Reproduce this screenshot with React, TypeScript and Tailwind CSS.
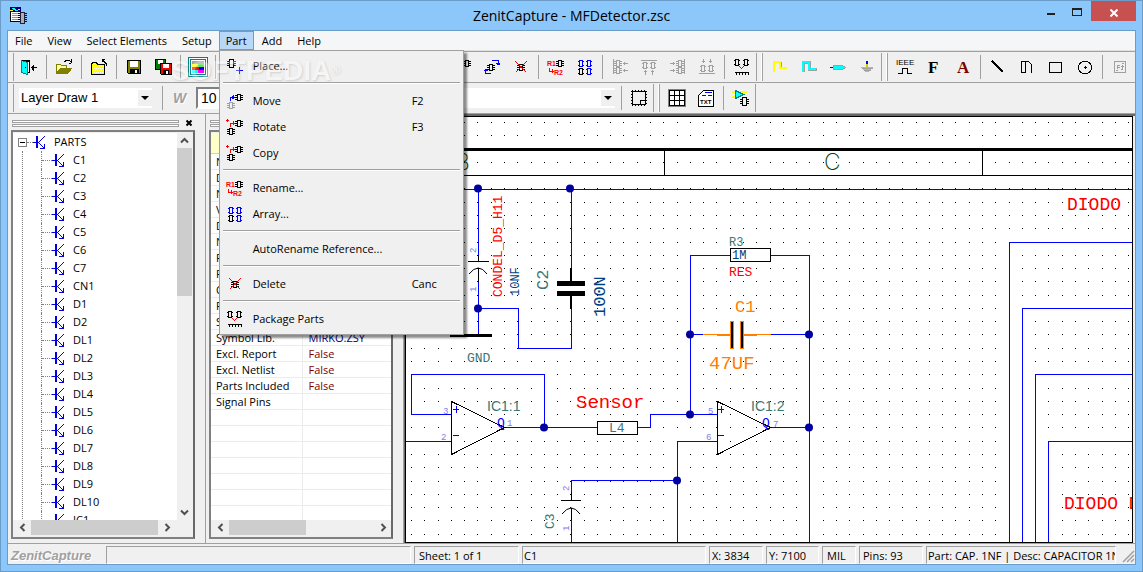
import { Fragment, type ReactNode } from "react";

/* ---------- small drawing helpers for the 18x18 toolbar glyphs ---------- */

function Glyph({ children }: { children?: ReactNode }) {
  return (
    <svg
      className="size-[18px] shrink-0 overflow-visible"
      viewBox="0 0 18 18"
      fill="none"
      stroke="#000"
      shapeRendering="crispEdges"
      aria-hidden="true"
    >
      {children}
    </svg>
  );
}

// IC package standing upright, pins left and right
function Chip({ x, y, c = "#000" }: { x: number; y: number; c?: string }) {
  return (
    <path
      transform={`translate(${x} ${y})`}
      stroke={c}
      d="M2.5 .5h4v8h-4zM0 2.5h2M0 4.5h2M0 6.5h2M7 2.5h2M7 4.5h2M7 6.5h2"
    />
  );
}

function SmallChip({ x, y, c = "#000" }: { x: number; y: number; c?: string }) {
  return (
    <path
      transform={`translate(${x} ${y})`}
      stroke={c}
      d="M2.5 .5h3v6h-3zM0 1.5h2M0 3.5h2M0 5.5h2M6 1.5h2M6 3.5h2M6 5.5h2"
    />
  );
}

function TinyChip({ x, y, c = "#000" }: { x: number; y: number; c?: string }) {
  return (
    <path
      transform={`translate(${x} ${y})`}
      stroke={c}
      d="M1.5 .5h3v6h-3zM0 1.5h1M0 5.5h1M5 1.5h1M5 5.5h1"
    />
  );
}

const GREY = "#a0a0a0";

const icons: Record<string, ReactNode> = {
  exit: (
    <>
      <path fill="#fff" d="M2.5 3.5h7v11h-7z" />
      <path fill="#0ff" stroke="#008080" d="M1.500 2.500l6 2v12l-6-2z" />
      <path d="M5 9.500h1M11 9.500h6M13.500 6.500v6M12.500 7.500v4M2 2.500h7.500v3M8 14.500h1.500v-3" />
    </>
  ),
  open: (
    <>
      <path fill="#ff9" stroke="#808000" d="M1.500 15.500v-9h4l1 1h5v3h-6z" />
      <path fill="#808000" stroke="#808000" d="M2.500 15.500l3-5h11l-4 5z" />
      <path d="M9.500 3.500l2-1h3l2 2M16.500 1v4M14 5.500h2" />
    </>
  ),
  folder: (
    <>
      <path fill="#ff0" d="M1.500 16.500v-10l1-2h4l1 2h7v10z" />
      <path stroke="#fff" strokeDasharray="1 1" d="M3 8.500h11M4 10.500h10M3 12.500h11M4 14.500h10" />
      <path d="M12 1.500h3M12.500 1v3M13 2.500l3 3v2" />
    </>
  ),
  save: (
    <>
      <path fill="#808000" d="M2.500 2.500h13v13h-12l-1-1z" />
      <path fill="#fff" stroke="none" d="M5 3h8v6H5z" />
      <path fill="#000" stroke="none" d="M5 11h9v5H5z" />
      <path fill="#fff" stroke="none" d="M10 12h2v3h-2z" />
    </>
  ),
  saveAll: (
    <>
      <path fill="#008000" d="M1.500 1.500h10v10h-10z" />
      <path fill="#fff" stroke="none" d="M4 2h5v4H4z" />
      <path fill="red" d="M6.500 5.500h11v11h-10l-1-1z" />
      <path fill="#fff" stroke="none" d="M9 6h6v4H9z" />
      <path fill="#000" stroke="none" d="M9 12h6v4H9z" />
      <path fill="#fff" stroke="none" d="M12 13h2v3h-2z" />
    </>
  ),
  layers: (
    <>
      <path fill="#fff" stroke="#008080" d="M-.5 -.5h19v19h-19zM1.500 1.500h15v15h-15z" />
      <g stroke="none">
        <path fill="#a0a0a0" d="M3 3h12v3H3z" />
        <path fill="#ff0" d="M3 6h6v3H3z" />
        <path fill="#60f060" d="M9 6h6v4H9z" />
        <path fill="red" d="M3 9h7v3H3z" />
        <path fill="#00f" d="M10 9h5v3h-5z" />
        <path fill="#0ff" d="M3 12h6v3H3z" />
        <path fill="#f0f" d="M9 12h6v3H9z" />
      </g>
    </>
  ),
  place: (
    <>
      <Chip x={1} y={2} />
      <path stroke="#00f" d="M10 13.500h7M13.500 10v7" />
    </>
  ),
  move: (
    <>
      <SmallChip x={9} y={2} />
      <SmallChip x={1} y={10} c={GREY} />
      <path stroke="#00f" d="M4.500 9v-4h4M7.500 3v4M6.500 4v3" />
    </>
  ),
  rotate: (
    <>
      <SmallChip x={9} y={2} />
      <SmallChip x={1} y={10} />
      <path stroke="red" d="M4.500 9v-4h4M7.500 3v4M0 2.500h3M1.500 1v3" />
    </>
  ),
  swap: (
    <>
      <SmallChip x={4} y={6} />
      <path stroke="#00f" d="M9 2.500h6.500v3M13 5.500h4M14 6.500h3M8 15.500H2.500v-4M1 12.500h4M2 11.500h2" />
    </>
  ),
  delete: (
    <>
      <SmallChip x={5} y={6} />
      <path stroke="#f00000" strokeWidth="1.200" d="M3.500 3.500l11 11M14.500 3.500l-11 11" />
    </>
  ),
  rename: (
    <>
      <SmallChip x={9} y={2} />
      <text x="0" y="8" className="font-['Liberation_Sans'] text-[7px] font-bold" fill="red" stroke="none">R1</text>
      <text x="7" y="17" className="font-['Liberation_Sans'] text-[7px] font-bold" fill="red" stroke="none">R2</text>
      <path stroke="red" d="M2.500 10v3h4M5.500 11v4" />
    </>
  ),
  array: (
    <>
      <TinyChip x={2} y={2} c="#00f" />
      <TinyChip x={10} y={2} c="#00f" />
      <TinyChip x={2} y={10} />
      <TinyChip x={10} y={10} c="#00f" />
    </>
  ),
  alignLeft: (
    <>
      <path stroke={GREY} d="M2.500 1v15M12 5.500h5M13.500 4v3M12 12.500h5M13.500 11v3" />
      <SmallChip x={3} y={2} c={GREY} />
      <SmallChip x={3} y={9} c={GREY} />
    </>
  ),
  alignTop: (
    <>
      <path stroke={GREY} d="M1 2.500h16M5.500 12v5M4 13.500h3M12.500 12v5M11 13.500h3" />
      <TinyChip x={2} y={4} c={GREY} />
      <TinyChip x={10} y={4} c={GREY} />
    </>
  ),
  alignRight: (
    <>
      <path stroke={GREY} d="M15.500 1v15M1 5.500h5M4.500 4v3M1 12.500h5M4.500 11v3" />
      <SmallChip x={7} y={2} c={GREY} />
      <SmallChip x={7} y={9} c={GREY} />
    </>
  ),
  alignBottom: (
    <>
      <path stroke={GREY} d="M1 15.500h16M5.500 1v4M4 3.500h3M12.500 1v4M11 3.500h3" />
      <TinyChip x={2} y={7} c={GREY} />
      <TinyChip x={10} y={7} c={GREY} />
    </>
  ),
  pack: (
    <>
      <TinyChip x={1} y={1} />
      <TinyChip x={10} y={1} />
      <path stroke="red" d="M6.500 8.500l2 2 2-2" />
      <path d="M2 14.500h14M3.500 14v3M6.500 14v3M9.500 14v3M12.500 14v3M15.500 14v3" />
    </>
  ),
  wire: (
    <>
      <path stroke={GREY} d="M3.500 14V4.500h7v5h5" />
      <path stroke="#ff0" strokeWidth="2" d="M3 14V4h6v6h7" />
    </>
  ),
  bus: (
    <>
      <path stroke={GREY} strokeWidth="3" d="M3.500 14V4.500h6v7h7" />
      <path stroke="#0ff" strokeWidth="2" d="M3 14V4h6v7h7" />
    </>
  ),
  port: (
    <>
      <path stroke="#00f" d="M1 9.500h3" />
      <path fill="#0ff" stroke={GREY} d="M4.500 7.500h9l3 2-3 2h-9z" />
    </>
  ),
  ground: (
    <>
      <path stroke="#00f" strokeWidth="2" d="M9 3v3" />
      <path stroke="#cc0" strokeWidth="2" d="M9 6v4" />
      <path stroke="#cc0" d="M3 9.500h12M5 11.500h8M7 13.500h4" />
      <path stroke={GREY} d="M4 10.500h11M6 12.500h7" />
    </>
  ),
  ieee: (
    <>
      <text x="0" y="7" className="font-['Liberation_Sans'] text-[8px]" fill="#000" stroke="none">IEEE</text>
      <path d="M2 15.500h4.500v-5h5v5h4.500" />
    </>
  ),
  bold: (
    <text x="3" y="15" className="font-['Liberation_Serif'] text-[17px] font-bold" fill="#000" stroke="none">F</text>
  ),
  text: (
    <text x="3" y="15" className="font-['Liberation_Serif'] text-[17px] font-bold" fill="#800000" stroke="none">A</text>
  ),
  line: <path strokeWidth="2" d="M3 3l11 11" />,
  curve: <path d="M3 3.500h3.500M3.500 3v11M3 14.500h4.500v-11h3l3 3v8" />,
  rect: <path d="M2.500 4.500h12v10h-12z" />,
  circle: (
    <>
      <circle cx="9" cy="9.500" r="6.500" />
      <path d="M8 9.500h3M9.500 8v3" />
    </>
  ),
  image: (
    <path stroke={GREY} d="M3.500 3.500h11v11h-11zM6.500 11v-4h2M6 9.500h3M11.500 7v4h-2M10 8.500h3M11 5.500h2M5 12.500h2" />
  ),
  frame: (
    <>
      <path d="M2.500 2.500h13v13h-13zM10.500 15v-4h5" />
      <path strokeDasharray="1 2" d="M2 1.500h15M2 16.500h15M1.500 2v15M16.500 2v15" />
    </>
  ),
  grid: (
    <>
      <path stroke="#808080" d="M.5 .5h17v17H.5z" />
      <path fill="#fff" d="M1.500 1.500h15v15h-15zM6.500 1v15M11.500 1v15M1 6.500h15M1 11.500h15" />
    </>
  ),
  txt: (
    <>
      <path fill="#fff" d="M1.500 17.500v-11l5-5h10v16z" />
      <path stroke="#00f" d="M8 3.500h7M5 6.500h4M11 6.500h4" />
      <text x="3" y="15" className="font-['Liberation_Sans'] text-[6px] font-bold" fill="#000" stroke="none">TXT</text>
    </>
  ),
  amp: (
    <>
      <path stroke="#ff0" strokeWidth="2" d="M0 3h15M0 8h4" />
      <path fill="#0ff" stroke="#008080" d="M3.500 1.500l8 4-8 4z" />
      <Chip x={8} y={8} />
    </>
  ),
};

/* ---------- data ---------- */

const menuEntries = [
  [{ label: "Place...", icon: "place" }],
  [
    { label: "Move", icon: "move", key: "F2" },
    { label: "Rotate", icon: "rotate", key: "F3" },
    { label: "Copy", icon: "rotate" },
  ],
  [
    { label: "Rename...", icon: "rename" },
    { label: "Array...", icon: "array" },
  ],
  [{ label: "AutoRename Reference..." }],
  [{ label: "Delete", icon: "delete", key: "Canc" }],
  [{ label: "Package Parts", icon: "pack" }],
] as { label: string; icon?: string; key?: string }[][];

// "|" is a separator, "#" starts a new docked bar
const mainBar =
  "exit | open | folder | save saveAll | layers | open save | move # place | wire bus | line rotate swap delete | rename array | alignLeft alignTop alignRight alignBottom | pack # wire bus port ground # ieee bold text | line curve rect circle | image".split(" ");

const parts = [
  "C1", "C2", "C3", "C4", "C5", "C6", "C7", "CN1", "D1", "D2", "DL1", "DL2",
  "DL3", "DL4", "DL5", "DL6", "DL7", "DL8", "DL9", "DL10", "IC1",
];

const properties = [
  ["Name"], ["Description"], ["Number"], ["Value"], ["Device"], ["Net"],
  ["Package"], ["Pins"], ["Order"], ["Position"], ["Style"],
  ["Symbol Lib.", "MIRKO.ZSY"],
  ["Excl. Report", "False"],
  ["Excl. Netlist", "False"],
  ["Parts Included", "False"],
  ["Signal Pins"],
  [], [], [], [], [], [], [], [],
];

/* ---------- toolbars ---------- */

function Separator() {
  return (
    <div className="flex w-1.5 shrink-0 items-center justify-center">
      <div className="h-6 w-px bg-[#a0a0a0]" />
    </div>
  );
}

function Grip() {
  return (
    <div className="flex w-[9px] shrink-0 gap-1 self-stretch py-px">
      <div className="w-px bg-[#a0a0a0]" />
      <div className="w-0.5 border-r border-[#a0a0a0] bg-white" />
    </div>
  );
}

function ToolButton({ name }: { name: string }) {
  return (
    <button aria-label={name} className="flex h-7 w-[29px] shrink-0 items-center justify-center">
      <Glyph>{icons[name]}</Glyph>
    </button>
  );
}

function Combo({ label, value, className }: { label: string; value?: string; className: string }) {
  return (
    <div className={`relative h-5 ${className}`}>
      <select
        aria-label={label}
        className="block h-5 w-full appearance-none bg-white px-0.5 font-['Liberation_Sans',sans-serif] text-[13px] leading-5"
      >
        <option>{value}</option>
      </select>
      <svg className="pointer-events-none absolute top-0.5 right-0 h-4 w-3.5 bg-[#f0f0f0]" viewBox="0 0 14 16">
        <path d="M3 6h8l-4 4z" />
      </svg>
    </div>
  );
}

/* ---------- docked panels ---------- */

function Chevron({ dir }: { dir: "up" | "down" | "left" | "right" }) {
  const d = {
    up: "M4 9.500l3.500-3.500 3.500 3.500",
    down: "M4 5.500l3.500 3.500 3.500-3.500",
    left: "M9.500 4l-3.500 3.500 3.500 3.500",
    right: "M5.500 4l3.500 3.500-3.500 3.500",
  }[dir];
  return (
    <svg className="size-[15px] shrink-0" viewBox="0 0 15 15" fill="none" stroke="#505050" strokeWidth="2">
      <path d={d} />
    </svg>
  );
}

function DockPanel({ closable, children }: { closable?: boolean; children: ReactNode }) {
  return (
    <section className="flex w-[198px] shrink-0 flex-col border-r border-[#a0a0a0] pt-0.5 pr-[10px] pb-1 pl-[3px]">
      <div className="flex h-3.5 shrink-0 items-center gap-1 pl-px">
        <div className="flex grow flex-col gap-px">
          <div className="h-[3px] border border-[#a0a0a0] bg-white" />
          <div className="h-[3px] border border-[#a0a0a0] bg-white" />
        </div>
        {closable && (
          <button aria-label="Close panel" className="flex size-3 items-center justify-center">
            <svg className="size-2" viewBox="0 0 8 8" stroke="#000" strokeWidth="2">
              <path d="M1.500 1.500l5 5M6.500 1.500l-5 5" />
            </svg>
          </button>
        )}
      </div>
      <div className="flex min-h-0 grow flex-col border-2 border-[#808080] border-r-[#696969] bg-[#f0f0f0] pt-px">
        {children}
      </div>
    </section>
  );
}

function PartIcon() {
  return (
    <svg className="h-[14px] w-[13px] shrink-0" viewBox="0 0 13 14" fill="none" stroke="#0000e0" shapeRendering="crispEdges">
      <path strokeWidth="2" d="M4 1v12" />
      <path d="M0 7.500h5M5.500 7.500l6-6M5.500 7.500l5.500 5.500M11.500 9v4.500M7 13.500h5" />
    </svg>
  );
}

function PartsTree() {
  return (
    <>
      <div className="flex min-h-0 grow">
        <ul className="min-w-0 grow overflow-hidden bg-white">
          <li>
            <button className="flex h-[18px] w-full items-center pl-[5px]">
              <svg className="size-[9px] shrink-0" viewBox="0 0 9 9" fill="none" shapeRendering="crispEdges">
                <path stroke="#808080" d="M.5 .5h8v8h-8z" />
                <path stroke="#000" d="M2 4.500h5" />
              </svg>
              <span className="w-1.5 border-t border-dotted border-[#808080]" />
              <PartIcon />
              <span className="pl-2">PARTS</span>
            </button>
            <ul className="ml-[9px] border-l border-dotted border-[#808080] pl-[18px]">
              {parts.map((part) => (
                <li key={part} className="border-l border-dotted border-[#808080]">
                  <button className="flex h-[18px] items-center">
                    <span className="w-2.5 border-t border-dotted border-[#808080]" />
                    <PartIcon />
                    <span className="pl-2">{part}</span>
                  </button>
                </li>
              ))}
            </ul>
          </li>
        </ul>
        <div className="mr-px flex w-[15px] shrink-0 flex-col">
          <Chevron dir="up" />
          <div className="h-[148px] bg-[#cdcdcd]" />
          <div className="grow" />
          <Chevron dir="down" />
        </div>
      </div>
      <div className="mr-[18px] mb-0.5 flex h-[15px] shrink-0 pl-0.5">
        <Chevron dir="left" />
        <div className="mr-0.5 ml-px grow bg-[#cdcdcd]" />
        <Chevron dir="right" />
      </div>
    </>
  );
}

function PropertyTable() {
  return (
    <>
      <div className="min-h-0 grow overflow-hidden bg-white">
        <table className="w-full table-fixed border-collapse">
          <thead>
            <tr className="h-5 border-b border-[#d0d0d0] bg-[#f8f8f0]">
              <th className="w-[91px] bg-[#ffffc8]" />
              <th />
            </tr>
          </thead>
          <tbody>
            {properties.map(([name, value], i) => (
              <tr key={i} className="h-4 border-b border-[#ececec] leading-[15px]">
                <td className="truncate border-r border-[#ececec] py-0 pl-[5px]">{name}</td>
                <td className={`truncate py-0 pl-1.5 ${value === "False" ? "text-[#800000]" : "text-[#000080]"}`}>
                  {value}
                </td>
              </tr>
            ))}
          </tbody>
        </table>
      </div>
      <div className="mb-0.5 flex h-[15px] shrink-0 pl-0.5">
        <Chevron dir="left" />
        <div className="ml-px w-[77px] bg-[#cdcdcd]" />
        <div className="grow" />
        <Chevron dir="right" />
      </div>
    </>
  );
}

/* ---------- schematic sheet ---------- */

const PITCH = 13.28;

function gridDots() {
  let d = "";
  for (let row = 0; row < 80; row++) {
    const y = Math.round(122 + row * PITCH);
    for (let col = 0; col < 160; col++) {
      d += `M${Math.round(411 + col * PITCH)} ${y}.5h1`;
    }
  }
  return d;
}

const junctions = [
  [478, 188], [570, 188], [478, 308], [544, 427], [690, 414],
  [690, 334], [809, 334], [809, 427], [677, 480],
];

function Label({ x, y, c, size, up, children }: { x: number; y: number; c: string; size: string; up?: boolean; children: string }) {
  return (
    <text x={x} y={y} fill={c} stroke="none" className={size} transform={up ? `rotate(-90 ${x} ${y})` : undefined}>
      {children}
    </text>
  );
}

function Schematic() {
  const teal = "#3a7878";
  const pin = "#8080f0";
  return (
    <svg
      className="block size-full font-['Liberation_Mono',monospace] whitespace-pre"
      fill="none"
      stroke="#000"
      shapeRendering="crispEdges"
      role="img"
      aria-label="Schematic sheet"
    >
      <g transform="translate(-406 -117)">
        <path d={gridDots()} />
        {/* sheet frame */}
        <path strokeWidth="3" d="M405 149.500h2000" />
        <path d="M405 175.500h2000M664.500 150v25M982.500 150v25" />
        <Label x={455} y={170} c="#004000" size="font-['Inter'] font-extralight text-[23px]">B</Label>
        <Label x={824} y={170} c="#004000" size="font-['Inter'] font-extralight text-[23px]">C</Label>

        {/* nets */}
        <path
          stroke="#0000ff"
          d="M405 189.500h2000M478.500 189v66M478.500 282v53M478 308.500h40v40h53V309M571.500 189v79
            M451 414.500h-39.500v-40h133v53M405 441.500h46M505 427.500h92M637 427.500h13.500v-13h67
            M571.500 492v-11.500h106M571.500 520v200M717 441.500h-39.500V720
            M730 255.500h-39.500v159M770 255.500h39.500V720M690 334.500h13M771 334.500h38M770 427.500h39
            M1009.500 720V242.500h2000M1022.500 720V308.500h2000M1035.500 720V374.500h2000M1048.500 720V441.500h2000"
        />

        {/* electrolytics */}
        <path d="M478.500 255v6M468 261.500h21M478.500 268v14M571.500 492v8M561 500.500h20M571.500 508v12" />
        <path shapeRendering="auto" d="M469 274q9.500-12 18 0M562 514q9.500-12 18 0" />
        <path strokeWidth="3" d="M450 335.500h42" />
        {/* C2 */}
        <path strokeWidth="2" d="M571 268v13M571 296v13" />
        <path strokeWidth="5" d="M557 283.500h28M557 293.500h28" />
        {/* op-amps */}
        <path d="M451.500 401.500l53 26-53 27zM717.500 401.500l53 26-53 27z" />
        <path stroke="#0000ff" d="M453 409.500h6M456.500 406v7M453 435.500h6M718 409.500h6M721.500 406v7M718 435.500h6" />
        {/* resistors */}
        <path fill="#fff" d="M597.500 421.500h40v13h-40zM730.500 248.500h40v13h-40z" />
        {/* C1, selected */}
        <path stroke="#ff8000" d="M703 334.500h14M757 334.500h14" />
        <path stroke="#ff8000" strokeWidth="2" d="M717 335h13M744 335h13" />
        <path stroke="none" fill="#ff8000" d="M730 321h4v28h-4zM740 321h4v28h-4z" />
        <path strokeWidth="2" d="M732 322v26M742 322v26" />

        {junctions.map(([x, y]) => (
          <circle key={`${x}-${y}`} cx={x} cy={y + 0.5} r="4" fill="#0000a0" stroke="none" shapeRendering="auto" />
        ))}

        <Label x={476} y={253} c={pin} size="text-[9px]" up>2</Label>
        <Label x={476} y={292} c={pin} size="text-[9px]" up>1</Label>
        <Label x={502} y={297} c="#ff0000" size="text-[13px]" up>CONDEL_D5_H11</Label>
        <Label x={519} y={296} c="#004080" size="text-[12px]" up>10NF</Label>
        <Label x={548} y={290} c={teal} size="text-[17px]" up>C2</Label>
        <Label x={605} y={317} c="#004080" size="text-[17px]" up>100N</Label>
        <Label x={467} y={362} c={teal} size="text-[13px]">GND</Label>
        <Label x={487} y={411} c={teal} size="font-['Liberation_Sans'] text-[14px]">IC1:1</Label>
        <Label x={443} y={414} c={pin} size="text-[9px]">3</Label>
        <Label x={441} y={440} c={pin} size="text-[9px]">2</Label>
        <Label x={497} y={427} c="#0000ff" size="text-[13px]">Q</Label>
        <Label x={507} y={426} c={pin} size="text-[9px]">1</Label>
        <Label x={576} y={408} c="#ff0000" size="text-[19px]">Sensor</Label>
        <Label x={609} y={432} c={teal} size="text-[13px]">L4</Label>
        <Label x={554} y={529} c={teal} size="text-[13px]" up>C3</Label>
        <Label x={569} y={491} c={pin} size="text-[9px]" up>2</Label>
        <Label x={569} y={531} c={pin} size="text-[9px]" up>1</Label>
        <Label x={729} y={246} c={teal} size="text-[12px]">R3</Label>
        <Label x={732} y={259} c="#004080" size="text-[12px]">1M</Label>
        <Label x={729} y={276} c="#ff0000" size="text-[13px]">RES</Label>
        <Label x={735} y={312} c="#ff8000" size="text-[17px]">C1</Label>
        <Label x={709} y={369} c="#ff8000" size="text-[19px]">47UF</Label>
        <Label x={751} y={411} c={teal} size="font-['Liberation_Sans'] text-[14px]">IC1:2</Label>
        <Label x={708} y={414} c={pin} size="text-[9px]">5</Label>
        <Label x={706} y={440} c={pin} size="text-[9px]">6</Label>
        <Label x={762} y={427} c="#0000ff" size="text-[13px]">Q</Label>
        <Label x={773} y={427} c={pin} size="text-[9px]">7</Label>
        <Label x={1067} y={210} c="#ff0000" size="text-[18px]">DIODO</Label>
        <Label x={1064} y={509} c="#ff0000" size="text-[18px]">DIODO D</Label>
      </g>
    </svg>
  );
}

/* ---------- menus ---------- */

function PartMenu() {
  return (
    <div
      role="menu"
      className="absolute top-full left-0 z-20 w-[245px] border border-[#a0a0a0] bg-[#f0f0f0] p-0.5 shadow-[3px_3px_2px_rgba(0,0,0,0.45)]"
    >
      {menuEntries.map((group, i) => (
        <Fragment key={i}>
          {i > 0 && (
            <div role="separator" className="mx-px flex h-[9px] flex-col pt-[3px]">
              <div className="h-px bg-[#a0a0a0]" />
              <div className="h-px bg-white" />
            </div>
          )}
          {group.map((entry) => (
            <button key={entry.label} role="menuitem" className="flex h-[26px] w-full items-center pl-1 text-left">
              <Glyph>{entry.icon && icons[entry.icon]}</Glyph>
              <span className="w-[166px] pl-[9px]">{entry.label}</span>
              <span className="pl-0.5">{entry.key}</span>
            </button>
          ))}
        </Fragment>
      ))}
    </div>
  );
}

function StatusField({ className, children }: { className: string; children?: ReactNode }) {
  return (
    <div className={`h-[18px] overflow-hidden border border-[#a0a0a0] border-r-white border-b-white whitespace-nowrap ${className}`}>
      {children}
    </div>
  );
}

export default function App() {
  return (
    <div className="flex h-screen flex-col overflow-hidden border border-[#6b9cc8] bg-[#8cc7fb] px-1.5 pb-1.5 font-['Open_Sans','Noto_Sans',sans-serif] text-[11px] leading-4 text-black">
      {/* Title bar */}
      <header className="flex h-[29px] shrink-0 items-start">
        <div className="flex w-32 pt-1.5 pl-[3px]">
          <svg className="size-[17px]" viewBox="0 0 17 17" fill="none" shapeRendering="crispEdges" aria-hidden="true">
            <path fill="#fff" stroke="#000" d="M.5 .5h10v14H.5z" />
            <path fill="#000080" d="M0 0h11v5H0z" />
            <path stroke="#0ff" d="M2 1.500h3M3 2.500h3M5 3.500h3" />
            <path stroke="#ff0" d="M0 3.500h3M8 2.500h2" />
            <path stroke="#909090" d="M2 6.500h6M2 8.500h6M2 10.500h6M2 12.500h6" />
            <path fill="#b0b0b0" stroke="#202040" d="M10.500 5.500h4v11h-4z" />
            <path stroke="#000080" strokeWidth="2" strokeDasharray="1 1" d="M9 6v10M16 6v10" />
          </svg>
        </div>
        <h1 className="grow text-center text-[14px] leading-[29px] font-normal">ZenitCapture - MFDetector.zsc</h1>
        <div className="flex w-32 justify-end">
          <button aria-label="Minimize" className="flex h-[19px] w-6 items-end justify-center pb-[5px]">
            <span className="h-[2px] w-2 bg-[#202020]" />
          </button>
          <button aria-label="Maximize" className="flex h-[19px] w-7 items-center justify-center pt-[3px]">
            <span className="h-2 w-[10px] border border-t-2 border-[#202020]" />
          </button>
          <button aria-label="Close" className="flex h-5 w-[45px] items-center justify-center bg-[#c75050] pt-1">
            <svg className="size-2" viewBox="0 0 8 8" stroke="#fff" strokeWidth="2">
              <path d="M.5 .5l7 7M7.500 .5l-7 7" />
            </svg>
          </button>
        </div>
      </header>

      <main className="relative flex min-h-0 grow flex-col border border-[#6b9cc8] bg-[#f0f0f0]">
        {/* Menu bar */}
        <nav className="flex h-5 shrink-0 border-b border-[#e0e0e0] bg-[#f5f6f7]">
          <button className="pr-2 pl-[7px]">File</button>
          <button className="pr-2 pl-[7px]">View</button>
          <button className="pr-2 pl-[7px]">Select Elements</button>
          <button className="px-[7px]">Setup</button>
          <div className="relative">
            <button className="h-[19px] border border-[#60a0e0] bg-[#b8d8f9] px-1.5" aria-haspopup="menu" aria-expanded="true">
              Part
            </button>
            <PartMenu />
          </div>
          <button className="pr-[7px] pl-2">Add</button>
          <button className="pr-[7px] pl-2">Help</button>
        </nav>

        {/* Main toolbar */}
        <div className="flex h-8 shrink-0 items-center overflow-hidden border-y border-[#a0a0a0]">
          <div className="h-7 w-1.5 shrink-0 border-r border-[#a0a0a0]" />
          {mainBar.map((item, i) =>
            item === "|" ? <Separator key={i} /> : item === "#" ? <Grip key={i} /> : <ToolButton key={i} name={item} />
          )}
        </div>

        {/* Layer toolbar */}
        <div className="flex h-[31px] shrink-0 items-center border-b border-[#a0a0a0]">
          <div className="mr-[5px] h-7 w-1.5 shrink-0 border-r border-[#a0a0a0]" />
          <Combo label="Layer" value="Layer Draw 1" className="mr-[7px] w-[133px] shrink-0" />
          <Separator />
          <label
            htmlFor="line-width"
            className="w-[31px] pl-2 font-['Liberation_Sans'] text-[14px] font-bold text-[#a0a0a0] italic [text-shadow:1px_1px_0_#fff]"
          >
            W
          </label>
          <input
            id="line-width"
            defaultValue="10"
            className="h-[22px] w-14 shrink-0 border-2 border-[#808080] border-r-white border-b-white bg-white px-[3px] font-['Liberation_Sans'] text-[14px]"
          />
          <Combo label="Part name" className="mr-[3px] ml-20 w-[283px] shrink-0" />
          <Separator />
          <ToolButton name="frame" />
          <Grip />
          <ToolButton name="grid" />
          <ToolButton name="txt" />
          <Separator />
          <ToolButton name="amp" />
          <div className="h-7 w-px bg-[#a0a0a0]" />
        </div>

        {/* Work area */}
        <div className="flex min-h-0 grow">
          <DockPanel closable>
            <PartsTree />
          </DockPanel>
          <DockPanel>
            <PropertyTable />
          </DockPanel>
          <div className="min-w-0 grow border-t-2 border-l border-[#696969] pr-0.5">
            <div className="h-full border border-black bg-white">
              <Schematic />
            </div>
          </div>
        </div>

        {/* Status bar */}
        <footer className="flex h-[21px] shrink-0 items-end gap-[3px] border-t border-[#a0a0a0] bg-[#f0f0f0] leading-[17px]">
          <span className="w-[95px] shrink-0 pl-[3px] font-['Liberation_Sans'] text-[13px] font-bold text-[#a0a0a0] italic [text-shadow:1px_1px_0_#fff]">
            ZenitCapture
          </span>
          <StatusField className="w-[305px] shrink-0" />
          <StatusField className="w-[105px] shrink-0 pl-1">Sheet: 1 of 1</StatusField>
          <StatusField className="w-[184px] shrink-0 pl-px">C1</StatusField>
          <StatusField className="w-[54px] shrink-0 pl-0.5">X: 3834</StatusField>
          <StatusField className="w-[53px] shrink-0 pl-0.5">Y: 7100</StatusField>
          <StatusField className="w-[34px] shrink-0 pl-1">MIL</StatusField>
          <StatusField className="w-[64px] shrink-0 pl-[3px]">Pins: 93</StatusField>
          <StatusField className="min-w-0 grow pl-px">Part: CAP. 1NF | Desc: CAPACITOR 1NF</StatusField>
          <svg className="h-[18px] w-4 shrink-0" viewBox="0 0 16 18" stroke="#a0a0a0" strokeWidth="1.500">
            <path d="M4 16L15 5M8 16l7-7M12 16l3-3" />
          </svg>
        </footer>

        {/* Watermark */}
        <div className="pointer-events-none absolute top-5 left-[163px] z-30 text-[28px] leading-[40px] font-bold text-white opacity-35 [text-shadow:1px_1px_2px_#999] font-['Liberation_Sans',sans-serif]">
          SOFTPEDIA<sup className="text-[12px]">®</sup>
        </div>
      </main>
    </div>
  );
}
